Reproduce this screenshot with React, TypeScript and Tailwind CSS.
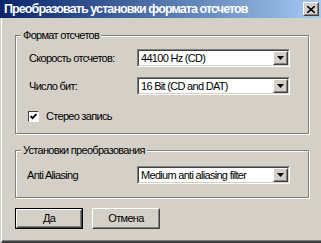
import React from 'react';

const font = "font-['Liberation_Sans',Arial,sans-serif] tracking-[-0.7px]";

const Raised = ({ className, children }: { className?: string; children?: React.ReactNode }) => (
  <div className={`border border-t-white border-l-white border-r-[#404040] border-b-[#404040] ${className ?? ''}`}>
    <div className="w-full h-full border border-t-[#d4d0c8] border-l-[#d4d0c8] border-r-[#808080] border-b-[#808080] bg-[#d4d0c8] flex items-center justify-center">
      {children}
    </div>
  </div>
);

const Combo = ({ value }: { value: string }) => (
  <div className="w-[153px] h-[18px] border border-t-[#808080] border-l-[#808080] border-r-white border-b-white">
    <div className="h-full flex items-center bg-white border border-t-[#404040] border-l-[#404040] border-r-[#d4d0c8] border-b-[#d4d0c8]">
      <span className="flex-1 pl-[2px] text-[11px] leading-none text-black whitespace-nowrap overflow-hidden">{value}</span>
      <Raised className="w-[15px] h-[14px] shrink-0">
        <svg width="7" height="4" viewBox="0 0 7 4">
          <path d="M0 0h7L3.5 4z" fill="#000" />
        </svg>
      </Raised>
    </div>
  </div>
);

const Group = ({ title, className, children }: { title: string; className?: string; children: React.ReactNode }) => (
  <div className={`relative border border-[#808080] shadow-[1px_1px_0_#fff,inset_1px_1px_0_#fff] ${className ?? ''}`}>
    <span className="absolute left-[5px] -top-[7px] px-[2px] bg-[#d4d0c8] text-[11px] leading-[12px] text-black">{title}</span>
    {children}
  </div>
);

export default function App() {
  return (
    <div className={`w-[321px] h-[243px] bg-[#d4d0c8] flex flex-col border-l border-l-[#d4d0c8] ${font}`}>
      <div className="flex flex-1 flex-col border-l border-l-white border-b-2 border-b-[#404040] shadow-[inset_0_-1px_0_#808080]">
        <div className="h-[18px] -ml-[2px] flex items-center bg-gradient-to-r from-[#0a246a] to-[#a6caf0] pl-[4px] pr-[2px]">
          <span className="flex-1 text-white font-bold text-[12.5px] tracking-[-0.9px] leading-none whitespace-nowrap">Преобразовать установки формата отсчетов</span>
          <Raised className="w-[16px] h-[14px]">
            <svg width="8" height="7" viewBox="0 0 8 7">
              <path d="M0 0l8 7M8 0L0 7" stroke="#000" strokeWidth="1.6" />
            </svg>
          </Raised>
        </div>

        <div className="flex flex-col pl-[13px] pr-[12px]">
          <Group title="Формат отсчетов" className="mt-[17px] h-[99px]">
            <div className="grid grid-cols-[108px_153px] items-center gap-y-[10px] pl-[13px] pt-[13px] text-[11px] text-black">
              <span>Скорость отсчетов:</span>
              <Combo value="44100 Hz (CD)" />
              <span>Число бит:</span>
              <Combo value="16 Bit (CD and DAT)" />
            </div>
            <div className="flex items-center gap-[7px] pl-[12px] mt-[13px] text-[11px] text-black">
              <div className="w-[11px] h-[11px] bg-white border border-t-[#404040] border-l-[#404040] border-r-white border-b-white flex items-center justify-center">
                <svg width="7" height="7" viewBox="0 0 7 7">
                  <path d="M0.5 3l2 2.2L6.5 1" stroke="#000" strokeWidth="1.8" fill="none" />
                </svg>
              </div>
              <span>Стерео запись</span>
            </div>
          </Group>

          <Group title="Установки преобразования" className="mt-[16px] h-[48px]">
            <div className="grid grid-cols-[110px_153px] items-center pl-[11px] pt-[15px] text-[11px] text-black">
              <span>Anti Aliasing</span>
              <Combo value="Medium anti aliasing filter" />
            </div>
          </Group>

          <div className="flex gap-[9px] mt-[10px] text-[11px] text-black">
            <div className="w-[68px] h-[21px] border border-black">
              <Raised className="w-full h-full">Да</Raised>
            </div>
            <Raised className="w-[68px] h-[21px]">Отмена</Raised>
          </div>
        </div>
      </div>
    </div>
  );
}
